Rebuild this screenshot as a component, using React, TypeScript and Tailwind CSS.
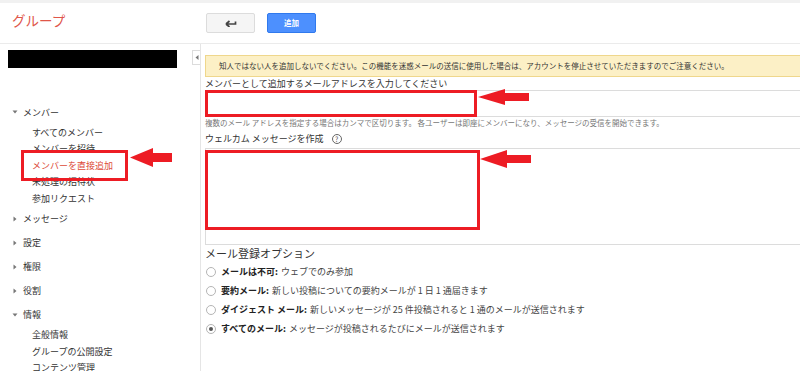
import React from 'react'

const RED = '#ed1c24'

function Arrow({ len, head, h, t, className }: { len: number; head: number; h: number; t: number; className: string }) {
  const c = h / 2
  return (
    <svg width={len} height={h} viewBox={`0 0 ${len} ${h}`} className={className}>
      <polygon
        fill={RED}
        points={`0,${c} ${head},0 ${head},${c - t / 2} ${len},${c - t / 2} ${len},${c + t / 2} ${head},${c + t / 2} ${head},${h}`}
      />
    </svg>
  )
}

function Caret({ open }: { open: boolean }) {
  return (
    <svg width="6" height="6" viewBox="0 0 6 6" className="mr-[5px] shrink-0">
      {open ? <polygon points="0.5,1.5 5.5,1.5 3,4.5" fill="#777" /> : <polygon points="1.5,0.5 4.5,3 1.5,5.5" fill="#777" />}
    </svg>
  )
}

function Section({ label, open }: { label: string; open?: boolean }) {
  return (
    <div className="h-6 flex items-center pl-[12px] text-[9px] leading-none text-[#333]">
      <Caret open={!!open} />
      {label}
    </div>
  )
}

function Sub({ label, active }: { label: string; active?: boolean }) {
  return (
    <div className={`h-[16.5px] flex items-center pl-[32px] text-[9px] leading-none ${active ? 'text-[#dd4b39]' : 'text-[#333]'}`}>
      {label}
    </div>
  )
}

function Radio({ checked, bold, text }: { checked?: boolean; bold: string; text: string }) {
  return (
    <div className="h-[19px] flex items-center text-[9px] text-[#444]">
      <span className="w-[10px] h-[10px] rounded-full border border-[#b5b5b5] flex items-center justify-center mr-[5px] ml-[1px] bg-white">
        {checked && <span className="w-[4px] h-[4px] rounded-full bg-[#555]" />}
      </span>
      <span className="font-bold text-[#222]">{bold}</span>
      <span className="ml-[3px]">{text}</span>
    </div>
  )
}

export default function App() {
  return (
    <div className="relative w-[800px] h-[371px] overflow-hidden bg-white font-['Noto_Sans_CJK_JP',sans-serif]">
      <div className="h-[3px] bg-[#f1f1f1]" />

      {/* Header */}
      <div className="h-[41px] flex items-center border-b border-[#ebebeb]">
        <div className="w-[206px] pl-[12px] -mt-[6px] text-[13.5px] text-[#e0564a]">グループ</div>
        <button className="w-[49px] h-[20px] flex items-center justify-center bg-[#f5f5f5] border border-[#dcdcdc] rounded-[2px]">
          <svg width="12" height="8" viewBox="0 0 12 8">
            <path d="M1 5 L4.5 2 M1 5 L4.5 8 M1 5 H10.5 V2.5" stroke="#444" strokeWidth="1.7" fill="none" />
          </svg>
        </button>
        <button className="ml-[12px] w-[49px] h-[20px] flex items-center justify-center bg-[#4d90fe] border border-[#3079ed] rounded-[2px] text-white text-[7.5px] font-bold">
          追加
        </button>
      </div>

      <div className="flex">
        {/* Sidebar */}
        <aside className="relative w-[200px] shrink-0">
          <div className="mt-[6px] ml-[8px] w-[169px] h-[18px] bg-black" />
          <div className="absolute right-0 top-[6px] w-[8px] h-[15px] border border-r-0 border-[#dcdcdc] bg-white flex items-center justify-center">
            <svg width="4" height="5" viewBox="0 0 4 5">
              <polygon points="3.5,0 3.5,5 0.5,2.5" fill="#777" />
            </svg>
          </div>
          <div className="mt-[32px]">
            <Section label="メンバー" open />
            <Sub label="すべてのメンバー" />
            <Sub label="メンバーを招待" />
            <Sub label="メンバーを直接追加" active />
            <Sub label="未処理の招待状" />
            <Sub label="参加リクエスト" />
            <Section label="メッセージ" />
            <Section label="設定" />
            <Section label="権限" />
            <Section label="役割" />
            <Section label="情報" open />
            <Sub label="全般情報" />
            <Sub label="グループの公開設定" />
            <Sub label="コンテンツ管理" />
          </div>
        </aside>

        {/* Main */}
        <main className="flex-1 h-[327px] border-l border-[#e5e5e5] pl-[4px]">
          <div className="mt-[11px] h-[22px] flex items-center bg-[#fcf0c6] border border-r-0 border-[#efd78c] pl-[13px] text-[7.5px] text-[#333] whitespace-nowrap">
            知人ではない人を追加しないでください。この機能を迷惑メールの送信に使用した場合は、アカウントを停止させていただきますのでご注意ください。
          </div>
          <div className="h-[13px] flex items-center text-[9px] text-[#333] whitespace-nowrap">
            メンバーとして追加するメールアドレスを入力してください
          </div>
          <div className="relative h-[27px] border border-r-0 border-[#dcdcdc]">
            <div className="absolute -left-px -top-px w-[272px] h-[27px] border-[3px] border-[#ed1c24]" />
            <Arrow len={51} head={27} h={16} t={8} className="absolute left-[272px] top-[-2px]" />
          </div>
          <div className="h-[11px] flex items-center text-[7.5px] text-[#777] whitespace-nowrap">
            複数のメール アドレスを指定する場合はカンマで区切ります。 各ユーザーは即座にメンバーになり、メッセージの受信を開始できます。
          </div>
          <div className="mt-[2px] h-[18px] flex items-center text-[9px] text-[#333]">
            ウェルカム メッセージを作成
            <span className="ml-[8px] w-[10px] h-[10px] rounded-full border border-[#666] flex items-center justify-center text-[7px] text-[#555] leading-none">
              ?
            </span>
          </div>
          <div className="relative h-[97px] border border-r-0 border-[#dcdcdc]">
            <div className="absolute -left-px top-[1px] w-[275px] h-[80px] border-[3px] border-[#ed1c24]" />
            <Arrow len={51} head={27} h={18} t={8} className="absolute left-[274px] top-[1px]" />
          </div>
          <div className="h-[17px] flex items-center text-[11px] text-[#333]">メール登録オプション</div>
          <Radio bold="メールは不可:" text="ウェブでのみ参加" />
          <Radio bold="要約メール:" text="新しい投稿についての要約メールが 1 日 1 通届きます" />
          <Radio bold="ダイジェスト メール:" text="新しいメッセージが 25 件投稿されると 1 通のメールが送信されます" />
          <Radio checked bold="すべてのメール:" text="メッセージが投稿されるたびにメールが送信されます" />
        </main>
      </div>

      {/* Annotation over the sidebar */}
      <div className="absolute left-[21px] top-[150px] w-[107px] h-[31px] border-[3px] border-[#ed1c24]" />
      <Arrow len={42} head={23} h={19} t={9} className="absolute left-[130px] top-[148px]" />
    </div>
  )
}
